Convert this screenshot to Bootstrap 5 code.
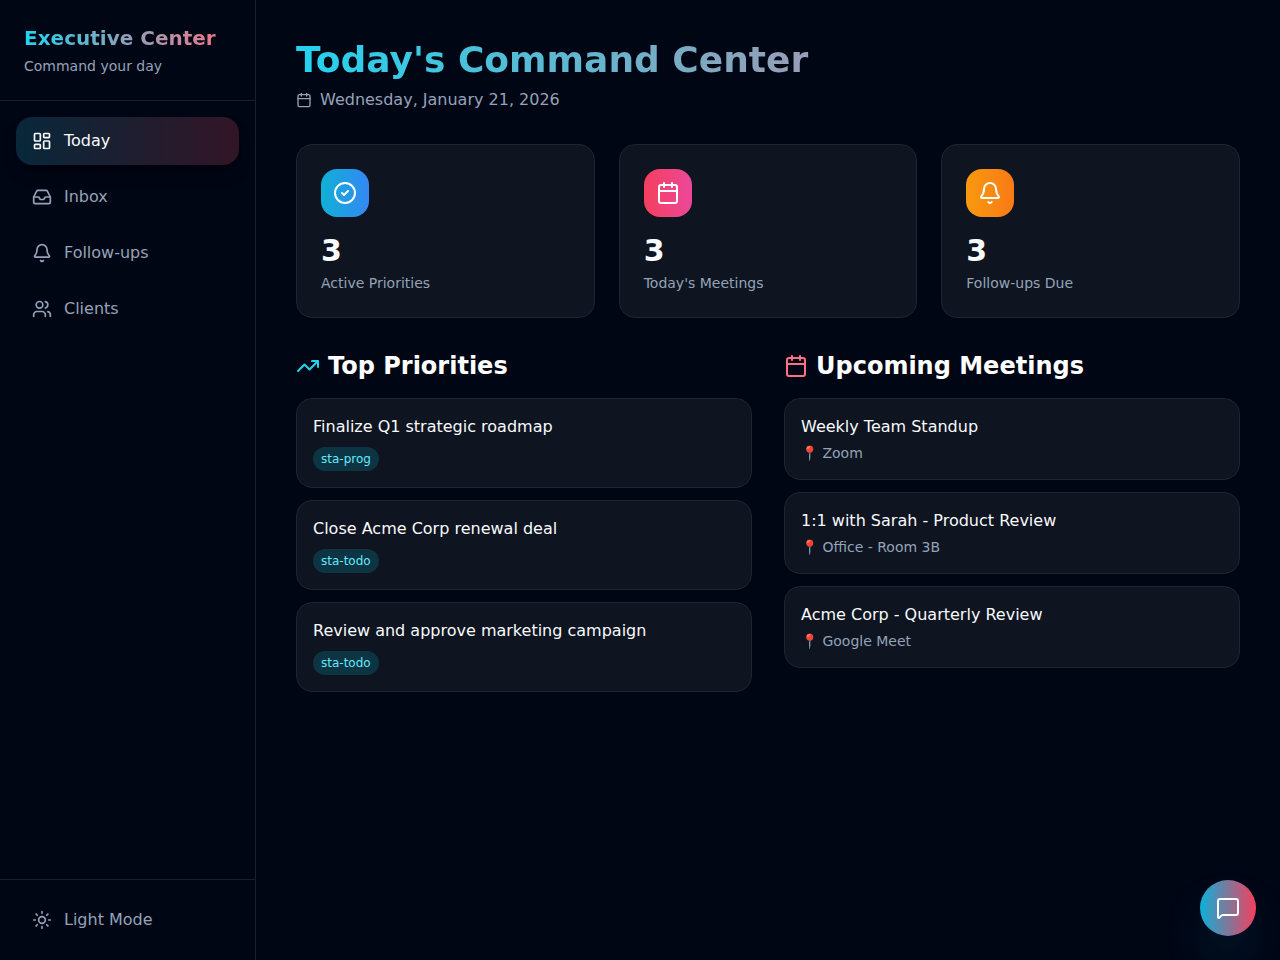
<!DOCTYPE html>
<html lang="en" data-bs-theme="dark">
<head>
<meta charset="utf-8">
<meta name="viewport" content="width=device-width, initial-scale=1">
<title>Executive Center</title>
<link href="https://cdn.jsdelivr.net/npm/bootstrap@5.3.0/dist/css/bootstrap.min.css" rel="stylesheet">
<style>
  :root {
    --ec-line: rgba(255, 255, 255, .1);
    --ec-muted: #94a3b8;
    --ec-text: #f8fafc;
  }
  body {
    background: #010615;
    color: var(--ec-text);
    font-family: "DejaVu Sans", sans-serif;
    font-size: 16px;
    line-height: 24px;
  }
  svg { fill: none; stroke: currentColor; stroke-width: 2; stroke-linecap: round; stroke-linejoin: round; flex-shrink: 0; }
  .i16 { width: 16px; height: 16px; }
  .i20 { width: 20px; height: 20px; }
  .i24 { width: 24px; height: 24px; }
  .muted { color: var(--ec-muted); }
  .text-14 { font-size: 14px; line-height: 20px; }
  .gradient-title {
    background: linear-gradient(to right, #22d3ee, #fb7185);
    -webkit-background-clip: text;
    background-clip: text;
    color: transparent;
  }
  .brand-title { font-size: 20px; line-height: 28px; }
  .page-title { font-size: 36px; line-height: 40px; }
  .section-title { font-size: 24px; line-height: 32px; }
  .stat-number { font-size: 30px; line-height: 36px; }
  .sidebar { border-color: var(--ec-line); border-style: solid; border-width: 0 0 1px; }
  .rule-bottom { border-bottom: 1px solid var(--ec-line); }
  .rule-top { border-top: 1px solid var(--ec-line); }
  .side-item {
    display: flex; align-items: center; gap: 12px; width: 100%;
    padding: 12px 16px; border: 0; border-radius: 16px;
    background: transparent; color: var(--ec-muted); text-decoration: none;
  }
  .side-item:hover { color: var(--ec-text); }
  .side-item.active {
    color: var(--ec-text);
    background: linear-gradient(to right, #08283a, #321526);
    box-shadow: 0 10px 15px -3px rgba(0, 0, 0, .3), 0 4px 6px -4px rgba(0, 0, 0, .3);
  }
  .panel { background: #0e1420; border: 1px solid #20242f; border-radius: 16px; }
  .stat-icon { width: 48px; height: 48px; border-radius: 16px; color: #fff; }
  .grad-blue { background: linear-gradient(to right, #10b0d5, #3488f5); }
  .grad-pink { background: linear-gradient(to right, #f43f5e, #ec4899); }
  .grad-orange { background: linear-gradient(to right, #f8990f, #f97a15); }
  .status-pill {
    display: inline-block; padding: 4px 8px; border-radius: 12px;
    background: rgba(6, 182, 212, .2); color: #67e8f9; font-size: 12px; line-height: 16px;
  }
  .cyan { color: #22d3ee; }
  .rose { color: #fb7185; }
  .chat-btn {
    right: 24px; bottom: 24px; width: 56px; height: 56px; color: #fff;
    background: linear-gradient(to right, #0cb0d8, #f43f5e);
    box-shadow: 0 25px 50px -12px rgba(6, 182, 212, .3);
  }
  .list-gap { gap: 12px; }
  .main-pad { padding: 24px; }
  .lists { --bs-gutter-x: 32px; --bs-gutter-y: 0; }
  @media (min-width: 768px) {
    .sidebar { width: 256px; height: 100vh; position: sticky; top: 0; border-width: 0 1px 0 0; }
    .main-pad { padding: 40px; }
  }
</style>
</head>
<body>
<div class="d-md-flex min-vh-100">
  <aside class="sidebar d-flex flex-column flex-shrink-0">
    <div class="p-4 rule-bottom">
      <div class="brand-title fw-bold gradient-title mb-1">Executive Center</div>
      <p class="text-14 muted mb-0">Command your day</p>
    </div>
    <nav class="d-flex flex-column gap-2 p-3 flex-grow-1" aria-label="Main">
      <a class="side-item active" href="#" aria-current="page">
        <svg class="i20" viewBox="0 0 24 24"><rect width="7" height="9" x="3" y="3" rx="1"/><rect width="7" height="5" x="14" y="3" rx="1"/><rect width="7" height="9" x="14" y="12" rx="1"/><rect width="7" height="5" x="3" y="16" rx="1"/></svg>
        <span>Today</span></a>
      <a class="side-item" href="#">
        <svg class="i20" viewBox="0 0 24 24"><path d="M22 12h-6l-2 3h-4l-2-3H2"/><path d="M5.45 5.11 2 12v6a2 2 0 0 0 2 2h16a2 2 0 0 0 2-2v-6l-3.45-6.89A2 2 0 0 0 16.76 4H7.24a2 2 0 0 0-1.79 1.11z"/></svg>
        <span>Inbox</span></a>
      <a class="side-item" href="#">
        <svg class="i20" viewBox="0 0 24 24"><path d="M10.268 21a2 2 0 0 0 3.464 0"/><path d="M3.262 15.326A1 1 0 0 0 4 17h16a1 1 0 0 0 .74-1.673C19.41 13.956 18 12.499 18 8A6 6 0 0 0 6 8c0 4.499-1.411 5.956-2.738 7.326"/></svg>
        <span>Follow-ups</span></a>
      <a class="side-item" href="#">
        <svg class="i20" viewBox="0 0 24 24"><path d="M16 21v-2a4 4 0 0 0-4-4H6a4 4 0 0 0-4 4v2"/><path d="M16 3.128a4 4 0 0 1 0 7.744"/><path d="M22 21v-2a4 4 0 0 0-3-3.87"/><circle cx="9" cy="7" r="4"/></svg>
        <span>Clients</span></a>
    </nav>
    <div class="p-3 rule-top">
      <button type="button" class="side-item">
        <svg class="i20" viewBox="0 0 24 24"><circle cx="12" cy="12" r="4"/><path d="M12 2v2M12 20v2M4.93 4.93l1.41 1.41M17.66 17.66l1.41 1.41M2 12h2M20 12h2M6.34 17.66l-1.41 1.41M19.07 4.93l-1.41 1.41"/></svg>
        <span>Light Mode</span></button>
    </div>
  </aside>

  <main class="main-pad flex-grow-1">
    <header class="mb-4 pb-2">
      <h1 class="page-title fw-bold gradient-title mb-2">Today's Command Center</h1>
      <p class="d-flex align-items-center gap-2 muted mb-0">
        <svg class="i16" viewBox="0 0 24 24"><path d="M8 2v4M16 2v4M3 10h18"/><rect width="18" height="18" x="3" y="4" rx="2"/></svg>
        <span>Wednesday, January 21, 2026</span></p>
    </header>

    <section class="row g-4 mb-4 pb-2" aria-label="Overview">
      <div class="col-12 col-md-4">
        <div class="panel p-4">
          <div class="stat-icon grad-blue d-flex align-items-center justify-content-center mb-3">
            <svg class="i24" viewBox="0 0 24 24"><circle cx="12" cy="12" r="10"/><path d="m9 12 2 2 4-4"/></svg></div>
          <div class="stat-number fw-bold mb-1">3</div>
          <div class="text-14 muted">Active Priorities</div>
        </div>
      </div>
      <div class="col-12 col-md-4">
        <div class="panel p-4">
          <div class="stat-icon grad-pink d-flex align-items-center justify-content-center mb-3">
            <svg class="i24" viewBox="0 0 24 24"><path d="M8 2v4M16 2v4M3 10h18"/><rect width="18" height="18" x="3" y="4" rx="2"/></svg></div>
          <div class="stat-number fw-bold mb-1">3</div>
          <div class="text-14 muted">Today's Meetings</div>
        </div>
      </div>
      <div class="col-12 col-md-4">
        <div class="panel p-4">
          <div class="stat-icon grad-orange d-flex align-items-center justify-content-center mb-3">
            <svg class="i24" viewBox="0 0 24 24"><path d="M10.268 21a2 2 0 0 0 3.464 0"/><path d="M3.262 15.326A1 1 0 0 0 4 17h16a1 1 0 0 0 .74-1.673C19.41 13.956 18 12.499 18 8A6 6 0 0 0 6 8c0 4.499-1.411 5.956-2.738 7.326"/></svg></div>
          <div class="stat-number fw-bold mb-1">3</div>
          <div class="text-14 muted">Follow-ups Due</div>
        </div>
      </div>
    </section>

    <div class="row lists">
      <section class="col-12 col-lg-6">
        <h2 class="section-title fw-bold d-flex align-items-center gap-2 mb-3">
          <svg class="i24 cyan" viewBox="0 0 24 24"><path d="M16 7h6v6"/><path d="m22 7-8.5 8.5-5-5L2 17"/></svg>
          <span>Top Priorities</span></h2>
        <div class="d-flex flex-column list-gap">
          <article class="panel p-3">
            <div class="mb-2">Finalize Q1 strategic roadmap</div>
            <div class="d-flex"><span class="status-pill">sta-prog</span></div>
          </article>
          <article class="panel p-3">
            <div class="mb-2">Close Acme Corp renewal deal</div>
            <div class="d-flex"><span class="status-pill">sta-todo</span></div>
          </article>
          <article class="panel p-3">
            <div class="mb-2">Review and approve marketing campaign</div>
            <div class="d-flex"><span class="status-pill">sta-todo</span></div>
          </article>
        </div>
      </section>
      <section class="col-12 col-lg-6 mt-4 mt-lg-0">
        <h2 class="section-title fw-bold d-flex align-items-center gap-2 mb-3">
          <svg class="i24 rose" viewBox="0 0 24 24"><path d="M8 2v4M16 2v4M3 10h18"/><rect width="18" height="18" x="3" y="4" rx="2"/></svg>
          <span>Upcoming Meetings</span></h2>
        <div class="d-flex flex-column list-gap">
          <article class="panel p-3">
            <div class="mb-1">Weekly Team Standup</div>
            <div class="text-14 muted">📍 Zoom</div>
          </article>
          <article class="panel p-3">
            <div class="mb-1">1:1 with Sarah - Product Review</div>
            <div class="text-14 muted">📍 Office - Room 3B</div>
          </article>
          <article class="panel p-3">
            <div class="mb-1">Acme Corp - Quarterly Review</div>
            <div class="text-14 muted">📍 Google Meet</div>
          </article>
        </div>
      </section>
    </div>
  </main>
</div>

<button type="button" class="chat-btn position-fixed rounded-circle border-0 p-0 d-flex align-items-center justify-content-center" aria-label="Open chat">
  <svg class="i24" viewBox="0 0 24 24"><path d="M22 17a2 2 0 0 1-2 2H6.828a2 2 0 0 0-1.414.586l-2.202 2.202A.71.71 0 0 1 2 21.286V5a2 2 0 0 1 2-2h16a2 2 0 0 1 2 2z"/></svg>
</button>
<script src="https://cdn.jsdelivr.net/npm/bootstrap@5.3.0/dist/js/bootstrap.bundle.min.js"></script>
</body>
</html>
